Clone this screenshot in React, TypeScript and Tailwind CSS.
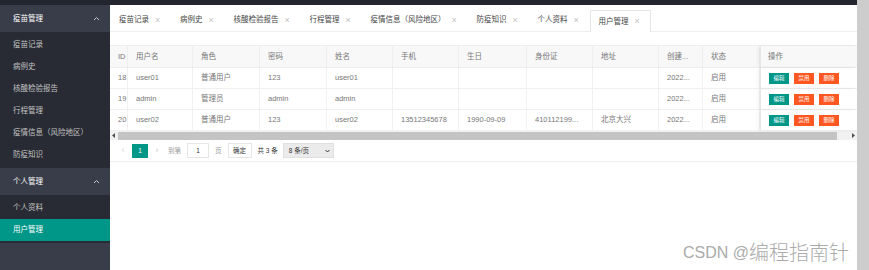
const menuGroups = [
  {
    title: "疫苗管理",
    items: ["疫苗记录", "病例史", "核酸检验报告", "行程管理", "疫情信息（风险地区）", "防疫知识"],
  },
  { title: "个人管理", items: ["个人资料", "用户管理"] },
];

const tabs = ["疫苗记录", "病例史", "核酸检验报告", "行程管理", "疫情信息（风险地区）", "防疫知识", "个人资料", "用户管理"];

const columns = [
  { label: "ID", w: "w-[18px]" },
  { label: "用户名", w: "w-[65px]" },
  { label: "角色", w: "w-[67px]" },
  { label: "密码", w: "w-[67px]" },
  { label: "姓名", w: "w-[66px]" },
  { label: "手机", w: "w-[66px]" },
  { label: "生日", w: "w-[68px]" },
  { label: "身份证", w: "w-[66px]" },
  { label: "地址", w: "w-[66px]" },
  { label: "创建...", w: "w-[44px]" },
  { label: "状态", w: "w-[57px]" },
];

const rows = [
  ["18", "user01", "普通用户", "123", "user01", "", "", "", "", "2022...", "启用"],
  ["19", "admin", "管理员", "admin", "admin", "", "", "", "", "2022...", "启用"],
  ["20", "user02", "普通用户", "123", "user02", "13512345678", "1990-09-09", "410112199...", "北京大兴", "2022...", "启用"],
];

function Caret() {
  return (
    <svg width="7" height="5" viewBox="0 0 7 5" className="shrink-0">
      <polyline points="1,4 3.5,1.5 6,4" fill="none" stroke="#c9c9c9" strokeWidth="1" />
    </svg>
  );
}

function Sidebar() {
  return (
    <aside className="w-[110px] shrink-0 bg-[#393D49] flex flex-col">
      {menuGroups.map((g) => (
        <div key={g.title}>
          <div className="h-[27px] flex items-center justify-between pl-[13px] pr-[10px] text-white">
            <span>{g.title}</span>
            <Caret />
          </div>
          <div className="bg-[#282B33] py-[2px]">
            {g.items.map((it) => (
              <div
                key={it}
                className={
                  it === "用户管理"
                    ? "h-[22px] flex items-center pl-[13px] bg-[#009688] text-white"
                    : "h-[22px] flex items-center pl-[13px] text-[#c2c2c2]"
                }
              >
                {it}
              </div>
            ))}
          </div>
        </div>
      ))}
    </aside>
  );
}

function Tabs() {
  return (
    <div className="h-[27px] flex items-end border-b border-[#eeeeee]">
      {tabs.map((t) => (
        <div
          key={t}
          className={
            t === "用户管理"
              ? "h-[22px] -mb-px flex items-center pl-[8px] pr-[9px] bg-white border border-b-0 border-[#e6e6e6] text-[#444]"
              : "h-[22px] flex items-center pl-[8px] pr-[9px] text-[#444] border border-transparent"
          }
        >
          <span>{t}</span>
          <span className="ml-[6px] w-[6px] text-[9px] leading-none text-[#c2c2c2]">×</span>
        </div>
      ))}
    </div>
  );
}

function Table() {
  return (
    <div className="relative border-t border-[#eeeeee]">
      <div className="flex h-[22px] bg-[#f8f8f8] border-b border-[#eeeeee] text-[#777]">
        {columns.map((c) => (
          <div key={c.label} className={`${c.w} shrink-0 flex items-center pl-[8px] border-r border-[#eeeeee] overflow-hidden whitespace-nowrap`}>
            {c.label}
          </div>
        ))}
        <div className="flex-1 flex items-center pl-[7px] border-l border-[#e6e6e6] shadow-[-2px_0_4px_rgba(0,0,0,0.05)]">操作</div>
      </div>
      {rows.map((r) => (
        <div key={r[0]} className="flex h-[21px] border-b border-[#f0f0f0] text-[#777]">
          {r.map((cell, i) => (
            <div
              key={i}
              className={`${columns[i].w} shrink-0 flex items-center pl-[8px] border-r border-[#f0f0f0] overflow-hidden whitespace-nowrap`}
            >
              {cell}
            </div>
          ))}
          <div className="flex-1 flex items-center gap-[5px] pl-[8px] border-l border-[#e6e6e6] shadow-[-2px_0_4px_rgba(0,0,0,0.05)]">
            <span className="w-[20px] h-[11px] flex items-center justify-center bg-[#009688] text-white text-[5.5px]">编辑</span>
            <span className="w-[20px] h-[11px] flex items-center justify-center bg-[#FF5722] text-white text-[5.5px]">禁用</span>
            <span className="w-[20px] h-[11px] flex items-center justify-center bg-[#FF5722] text-white text-[5.5px]">删除</span>
          </div>
        </div>
      ))}
      {/* horizontal scrollbar */}
      <div className="h-[9px] flex items-center bg-[#f1f1f1]">
        <div className="w-[8px] h-full flex items-center justify-center">
          <svg width="4" height="5" viewBox="0 0 4 5"><polygon points="3,0 3,5 0,2.5" fill="#505050" /></svg>
        </div>
        <div className="h-[8px] w-[719px] bg-[#c4c4c4]" />
        <div className="flex-1 h-full flex items-center justify-end pr-[2px]">
          <svg width="4" height="5" viewBox="0 0 4 5"><polygon points="1,0 1,5 4,2.5" fill="#505050" /></svg>
        </div>
      </div>
    </div>
  );
}

function Pager() {
  return (
    <div className="h-[22px] flex items-center pl-[4px] border-b border-[#eeeeee] text-[6.5px] text-[#666]">
      <span className="w-[18px] flex justify-center text-[#d2d2d2] text-[9px]">‹</span>
      <span className="w-[16px] h-[14px] flex items-center justify-center bg-[#009688] text-white">1</span>
      <span className="w-[18px] flex justify-center text-[#c8c8c8] text-[9px]">›</span>
      <span className="ml-[2px] text-[#999]">到第</span>
      <span className="ml-[6px] w-[22px] h-[15px] flex items-center justify-center border border-[#e6e6e6] text-[#333]">1</span>
      <span className="ml-[6px] text-[#999]">页</span>
      <span className="ml-[6px] w-[24px] h-[15px] flex items-center justify-center border border-[#e6e6e6] text-[#333]">确定</span>
      <span className="ml-[6px] text-[#333]">共 3 条</span>
      <span className="ml-[5px] w-[51px] h-[15px] flex items-center justify-between pl-[5px] pr-[3px] bg-[#ebebeb] border border-[#e0e0e0] text-[#333]">
        <span>8 条/页</span>
        <svg width="5" height="4" viewBox="0 0 5 4"><polyline points="0.5,1 2.5,3 4.5,1" fill="none" stroke="#333" strokeWidth="1" /></svg>
      </span>
    </div>
  );
}

export default function App() {
  return (
    <div className="relative w-[869px] h-[270px] overflow-hidden bg-white flex font-['Liberation_Sans','Noto_Sans_CJK_SC',sans-serif] text-[7.5px]">
      <div className="flex-1 flex flex-col">
        <div className="h-[5px] bg-[#23262E] shrink-0" />
        <div className="flex flex-1">
          <Sidebar />
          <main className="flex-1 flex flex-col">
            <Tabs />
            <div className="h-[13px]" />
            <Table />
            <Pager />
          </main>
        </div>
      </div>
      <div className="w-[12px] bg-[#cdcdcd] shrink-0" />

      {/* watermark */}
      <div className="absolute left-[683px] top-[243px] h-[20px] flex items-center text-[#ababab] font-light [text-shadow:0_0_1px_rgba(255,255,255,0.8)]">
        <span className="text-[16px] leading-none">CSDN @</span>
        <span className="text-[20px] leading-none">编程指南针</span>
      </div>
    </div>
  );
}
